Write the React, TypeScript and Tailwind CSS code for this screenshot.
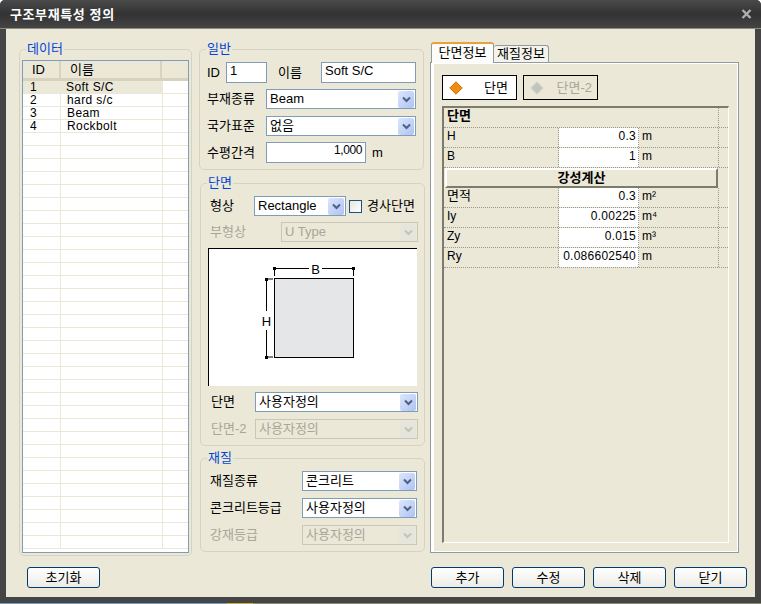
import type { ReactNode } from 'react';

const FONT = '[font-family:"Liberation_Sans","Noto_Sans_CJK_KR",sans-serif]';

function Group({ title, className, children }: { title: string; className: string; children: ReactNode }) {
  return (
    <fieldset className={`rounded-[5px] border border-[#d6d3c2] ${className}`}>
      <legend className="ml-[6px] h-[14px] px-[1px] text-[13px] leading-[14px] text-[#0046d5]">{title}</legend>
      {children}
    </fieldset>
  );
}

function Chevron({ off }: { off?: boolean }) {
  return (
    <span
      className={`flex h-[17px] w-[16px] shrink-0 items-center justify-center rounded-[2px] ${
        off ? 'bg-[#e6e5dc]' : 'bg-gradient-to-br from-[#dde6fb] to-[#aec3f3]'
      }`}
    >
      <svg width="9" height="7" viewBox="0 0 9 7">
        <path d="M1 1.5 L4.5 5 L8 1.5" fill="none" stroke={off ? '#c4c3b6' : '#4d6185'} strokeWidth="2" />
      </svg>
    </span>
  );
}

function Select({ value, className, off }: { value: string; className: string; off?: boolean }) {
  return (
    <div
      className={`flex h-[20px] items-center justify-between border pr-[1px] pl-[3px] text-[13px] ${
        off ? 'border-[#c9c7ba] bg-[#ebe8d8] text-[#a8a698]' : 'border-[#7f9db9] bg-white text-black'
      } ${className}`}
    >
      <span>{value}</span>
      <Chevron off={off} />
    </div>
  );
}

function Input({ value, className }: { value: string; className: string }) {
  return (
    <div className={`h-[21px] border border-[#7f9db9] bg-white px-[3px] leading-[15px] ${className}`}>
      {value}
    </div>
  );
}

function Label({ text, className, off }: { text: string; className: string; off?: boolean }) {
  return <span className={`text-[13px] ${off ? 'text-[#a8a698]' : 'text-black'} ${className}`}>{text}</span>;
}

function Btn({ label }: { label: string }) {
  return (
    <button className="h-[21px] w-[73px] rounded-[3px] border border-[#003c74] bg-gradient-to-b from-white to-[#ecebe5] text-[13px] leading-[18px] text-black">
      {label}
    </button>
  );
}

const listRows = ['Soft S/C', 'hard s/c', 'Beam', 'Rockbolt'];

function DataList() {
  const rows = Array.from({ length: 36 }, (_, i) => listRows[i] ?? '');
  return (
    <div className="mx-[2px] mt-[4px] h-[493px] overflow-hidden border border-[#7f9db9] bg-white">
      <div className="flex h-[20px] border-b-[3px] border-[#d6d2bd] bg-[#ebe8d8] text-[13px] leading-[18px]">
        <div className="w-[36px] pl-[9px]">ID</div>
        <div className="w-[101px] border-l-2 border-[#d6d3c2] pl-[9px]">이름</div>
        <div className="flex-1 border-l-2 border-[#d6d3c2]" />
      </div>
      {rows.map((name, i) => (
        <div key={i} className="flex h-[13px] border-b border-[#ebe8d8] text-[12px] leading-[12px] tracking-[0.4px]">
          <div className={`w-[37px] pl-[7px] ${i === 0 ? 'bg-[#ebe8d8]' : ''}`}>{i < 4 ? i + 1 : ''}</div>
          <div className={`w-[102px] pl-[6px] ${i === 0 ? 'bg-[#ebe8d8]' : 'border-l border-[#ebe8d8]'}`}>{name}</div>
          <div className="flex-1 border-l border-[#ebe8d8]" />
        </div>
      ))}
    </div>
  );
}

function SectionDrawing() {
  return (
    <div className="mt-[6px] ml-[7px] h-[138px] w-[209px] border-t border-l border-black bg-white">
      <svg width="208" height="137" viewBox="0 0 208 137">
        <rect x="65.5" y="29.5" width="79" height="79" fill="#e4e6e7" stroke="#000" />
        <path
          d="M65.5 19.5H100 M113 19.5H144.5 M65.5 19.5V27 M144.5 19.5V27 M57.5 30V62 M57.5 81V108 M57.5 30H64 M57.5 108H64"
          stroke="#000"
          fill="none"
        />
        <rect x="64" y="18" width="3" height="3" fill="#000" />
        <rect x="143" y="18" width="3" height="3" fill="#000" />
        <rect x="56" y="29" width="3" height="3" fill="#000" />
        <rect x="56" y="107" width="3" height="3" fill="#000" />
        <text x="106.5" y="24.5" fontSize="13" textAnchor="middle" fill="#000">B</text>
        <text x="57.5" y="76.5" fontSize="13" textAnchor="middle" fill="#000">H</text>
      </svg>
    </div>
  );
}

function Diamond({ off }: { off?: boolean }) {
  return (
    <svg width="14" height="14" viewBox="0 0 14 14">
      <path
        d="M7 0.8 L13.2 7 L7 13.2 L0.8 7 Z"
        fill={off ? '#c4c4be' : '#f08c10'}
        stroke={off ? '#d4d4ce' : '#c96f00'}
        strokeLinejoin="round"
      />
    </svg>
  );
}

function PropRow({ name, value, unit, bold, big }: { name: string; value?: string; unit?: string; bold?: boolean; big?: boolean }) {
  if (bold) {
    return (
      <div className="flex h-[20px] border-b border-dotted border-[#9a988a]">
        <div className="w-[274px] pl-[3px] text-[13px] leading-[15px] font-bold">{name}</div>
        <div className="flex-1 border-l border-dotted border-[#9a988a]" />
      </div>
    );
  }
  return (
    <div className="flex h-[20px] border-b border-dotted border-[#9a988a] text-[12px] leading-[17px]">
      <div className={`w-[115px] border-r border-dotted border-[#9a988a] pl-[3px] leading-[16px] ${big ? 'text-[13px]' : ''}`}>
        {name}
      </div>
      <div className="w-[80px] border-r border-dotted border-[#9a988a] bg-white pr-[2px] text-right tracking-[0.25px]">
        {value}
      </div>
      <div className="w-[79px] pl-[3px]">{unit}</div>
      <div className="flex-1 border-l border-dotted border-[#9a988a]" />
    </div>
  );
}

export default function App() {
  return (
    <div className={`flex h-[604px] w-[761px] flex-col overflow-hidden rounded-t-[5px] bg-[#454545] ${FONT}`}>
      {/* title bar */}
      <div className="flex h-[29px] items-center justify-between border-b border-[#8b8b80] bg-gradient-to-b from-[#4a4a4a] via-[#333333] to-[#444444] pr-[9px] pl-[10px]">
        <span className="pt-[1px] text-[13px] font-bold tracking-[0.6px] text-white">구조부재특성 정의</span>
        <svg width="11" height="10" viewBox="0 0 11 10">
          <path d="M1.5 1 L9.5 9 M9.5 1 L1.5 9" stroke="#b0b0b0" strokeWidth="2.4" />
        </svg>
      </div>

      <div className="mx-[6px] flex h-[568px] flex-col bg-[#ebe8d8]">
        <div className="flex h-[527px] pt-[13px]">
          <Group title="데이터" className="ml-[13px] h-[514px] w-[173px]">
            <DataList />
          </Group>

          <div className="ml-[7px] flex w-[225px] flex-col">
            <Group title="일반" className="h-[128px] w-[225px]">
              <div className="mt-[6px] flex h-[21px] items-center pl-[7px] text-[13px]">
                <Label text="ID" className="w-[19px]" />
                <Input value="1" className="w-[41px]" />
                <Label text="이름" className="ml-[11px] w-[43px]" />
                <Input value="Soft S/C" className="w-[95px]" />
              </div>
              <div className="mt-[6px] flex h-[20px] items-center pl-[7px]">
                <Label text="부재종류" className="w-[59px]" />
                <Select value="Beam" className="w-[150px]" />
              </div>
              <div className="mt-[7px] flex h-[20px] items-center pl-[7px]">
                <Label text="국가표준" className="w-[59px]" />
                <Select value="없음" className="w-[150px]" />
              </div>
              <div className="mt-[6px] flex h-[21px] items-center pl-[7px]">
                <Label text="수평간격" className="w-[59px]" />
                <Input value="1,000" className="w-[100px] text-right text-[12px] tracking-[-0.4px]" />
                <Label text="m" className="ml-[6px]" />
              </div>
            </Group>

            <Group title="단면" className="mt-[6px] ml-[1px] h-[270px] w-[225px]">
              <div className="mt-[6px] flex h-[20px] items-center pl-[9px]">
                <Label text="형상" className="w-[44px]" />
                <Select value="Rectangle" className="w-[92px]" />
                <span className="ml-[3px] h-[13px] w-[13px] border border-[#1c5180] bg-gradient-to-br from-[#e6e5dc] to-white" />
                <Label text="경사단면" className="ml-[5px]" />
              </div>
              <div className="mt-[6px] flex h-[20px] items-center pl-[9px]">
                <Label text="부형상" off className="w-[71px]" />
                <Select value="U Type" off className="w-[137px]" />
              </div>
              <SectionDrawing />
              <div className="mt-[6px] flex h-[20px] items-center pl-[10px]">
                <Label text="단면" className="w-[44px]" />
                <Select value="사용자정의" className="w-[163px]" />
              </div>
              <div className="mt-[7px] flex h-[20px] items-center pl-[10px]">
                <Label text="단면-2" off className="w-[44px]" />
                <Select value="사용자정의" off className="w-[163px]" />
              </div>
            </Group>

            <Group title="재질" className="mt-[5px] ml-[1px] h-[101px] w-[225px]">
              <div className="mt-[6px] flex h-[20px] items-center pl-[9px]">
                <Label text="재질종류" className="w-[92px]" />
                <Select value="콘크리트" className="w-[115px]" />
              </div>
              <div className="mt-[7px] flex h-[20px] items-center pl-[9px]">
                <Label text="콘크리트등급" className="w-[92px]" />
                <Select value="사용자정의" className="w-[115px]" />
              </div>
              <div className="mt-[7px] flex h-[20px] items-center pl-[9px]">
                <Label text="강재등급" off className="w-[92px]" />
                <Select value="사용자정의" off className="w-[115px]" />
              </div>
            </Group>
          </div>

          {/* tabs */}
          <div className="ml-[6px] flex w-[309px] flex-col">
            <div className="flex h-[20px] items-end pl-[1px] text-[13px]">
              <div className="z-10 -mb-[1px] h-[21px] w-[63px] rounded-t-[3px] border-t-2 border-r border-l border-t-[#e9a23b] border-r-[#919b9c] border-l-[#919b9c] bg-[#fcfcfa] text-center leading-[17px]">
                단면정보
              </div>
              <div className="h-[17px] w-[55px] rounded-t-[3px] border-t border-r border-[#919b9c] bg-[#f4f3ec] text-center leading-[16px]">
                재질정보
              </div>
            </div>
            <div className="h-[491px] border border-[#919b9c]">
              <div className="h-full border border-l-[3px] border-white pt-[11px] pl-[8px]">
                <div className="flex h-[25px] text-[13px]">
                  <div className="flex w-[75px] items-center justify-between border border-black bg-white pr-[8px] pl-[6px]">
                    <Diamond />
                    <span>단면</span>
                  </div>
                  <div className="ml-[6px] flex w-[75px] items-center justify-between border border-black pr-[5px] pl-[6px] text-[#a8a698]">
                    <Diamond off />
                    <span>단면-2</span>
                  </div>
                </div>
                <div className="mt-[6px] h-[437px] w-[287px] border-t-2 border-r border-b border-l-2 border-t-[#7d7b6c] border-r-white border-b-white border-l-[#7d7b6c]">
                  <PropRow name="단면" bold />
                  <PropRow name="H" value="0.3" unit="m" />
                  <PropRow name="B" value="1" unit="m" />
                  <div className="ml-[1px] h-[20px] w-[273px] border-2 border-[#7d7b6c] border-t-[#fff] border-l-[#fff] text-center text-[13px] leading-[15px] font-bold">
                    강성계산
                  </div>
                  <PropRow name="면적" value="0.3" unit="m²" big />
                  <PropRow name="Iy" value="0.00225" unit="m⁴" />
                  <PropRow name="Zy" value="0.015" unit="m³" />
                  <PropRow name="Ry" value="0.086602540" unit="m" />
                </div>
              </div>
            </div>
          </div>
        </div>

        <div className="flex items-start pt-[11px] pr-[8px] pl-[21px]">
          <Btn label="초기화" />
          <div className="ml-auto flex gap-[8px]">
            <Btn label="추가" />
            <Btn label="수정" />
            <Btn label="삭제" />
            <Btn label="닫기" />
          </div>
        </div>
      </div>

      {/* sliver of the window behind */}
      <div className="mt-auto flex h-[1px]">
        <div className="w-[227px] bg-[#6f9fc8]" />
        <div className="w-[26px] bg-[#c9b040]" />
        <div className="flex-1 bg-[#8a8f70]" />
      </div>
    </div>
  );
}
